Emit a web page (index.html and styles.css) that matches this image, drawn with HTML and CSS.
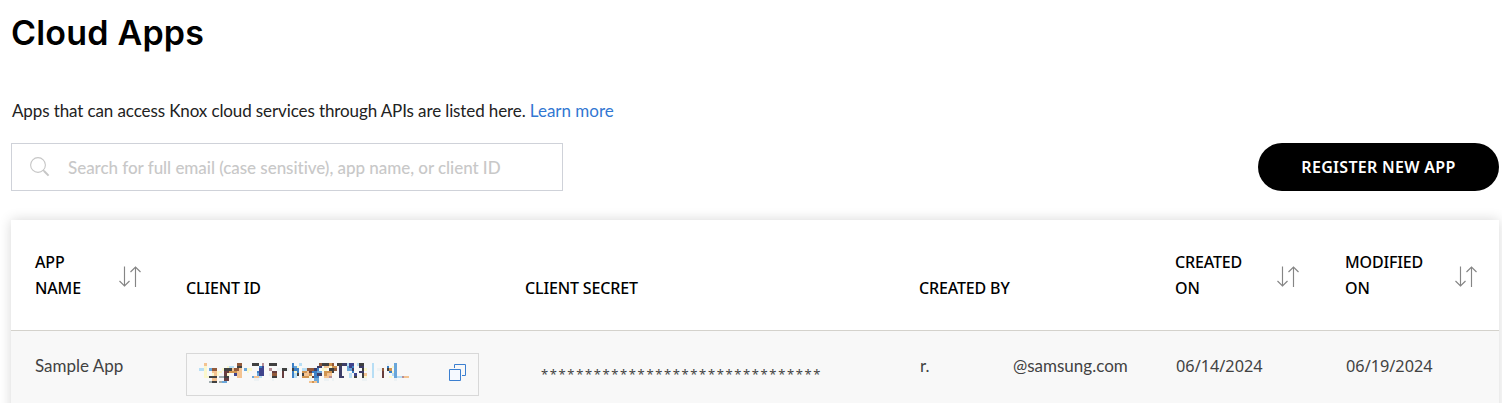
FILE: index.html
```html
<!DOCTYPE html>
<html lang="en">
<head>
<meta charset="utf-8">
<title>Cloud Apps</title>
<link rel="stylesheet" href="styles.css">
</head>
<body>
<svg class="defs" width="0" height="0"><symbol id="sort" viewBox="0 0 22 22"><path d="M5.5.5v20M.5 15l5 5 5-5M16.500 21V1M11.500 6l5-5 5 5" fill="none" stroke="#858585" stroke-width="1.150"/></symbol></svg>
<main class="page">
  <h1 class="title">Cloud Apps</h1>
  <p class="intro">Apps that can access Knox cloud services through APIs are listed here. <a class="link" href="#">Learn more</a></p>
  <div class="toolbar">
    <div class="search">
      <svg class="search-icon" width="20" height="20" viewBox="0 0 20 20" fill="none" stroke="#c6c6c6"><circle cx="8" cy="8" r="7.400" stroke-width="1.100"/><path d="M13 13l1.500 1.500" stroke-width="1.100"/><path d="M14 14l4.600 4.600" stroke-width="2"/></svg>
      <span>Search for full email (case sensitive), app name, or client ID</span>
    </div>
    <button class="register">REGISTER NEW APP</button>
  </div>
  <section class="table">
    <div class="row head">
      <div class="cell"><span class="w-name">APP NAME</span><svg class="sort s1"><use href="#sort"/></svg></div>
      <div class="cell">CLIENT ID</div>
      <div class="cell">CLIENT SECRET</div>
      <div class="cell">CREATED BY</div>
      <div class="cell"><span class="w-date">CREATED ON</span><svg class="sort s2"><use href="#sort"/></svg></div>
      <div class="cell"><span class="w-date">MODIFIED ON</span><svg class="sort s3"><use href="#sort"/></svg></div>
    </div>
    <div class="row body">
      <div class="cell text">Sample App</div>
      <div class="cell idcell">
        <div class="idbox">
          <svg id="mosaic" width="210" height="20" viewBox="0 0 84 8" shape-rendering="crispEdges"></svg>
          <svg width="18" height="18" viewBox="0 0 18 18" fill="none" stroke="#3c7fd0"><path d="M5.500 4V.500h11v11H13"/><path d="M.500 5.500h11v11H.500z" fill="#f5f9ff"/></svg>
        </div>
      </div>
      <div class="cell secret">********************************</div>
      <div class="cell text email"><span>r.</span><span>@samsung.com</span></div>
      <div class="cell date">06/14/2024</div>
      <div class="cell date">06/19/2024</div>
    </div>
  </section>
</main>
<script src="mosaic.js"></script>
</body>
</html>
```
FILE: styles.css
```css
* { box-sizing: border-box; }
body { margin: 0; background: #fff; overflow: hidden; height: 403px; font-family: Lato, "Noto Sans", sans-serif; font-size: 17px; color: #222; }
.defs { display: block; height: 0; }
.page { padding: 10px 3px 0 11px; }
.title { margin: 0; font: 600 34px/46px Inter, sans-serif; letter-spacing: 0.2px; color: #000; }
.intro { margin: 42px 0 0; padding-left: 1px; line-height: 26px; letter-spacing: -0.110px; white-space: nowrap; }
.link { color: #3277d2; text-decoration: none; letter-spacing: 0; }
.toolbar { display: flex; justify-content: space-between; margin-top: 19px; }
.search { display: flex; align-items: center; gap: 18px; width: 552px; height: 48px; padding-left: 18px; border: 1px solid #cfd2d9; color: #c8c8c8; letter-spacing: -0.040px; font-weight: 500; }
.register { width: 241px; height: 48px; padding: 0; border: 0; border-radius: 24px; background: #000; color: #fff; font: 600 16px "Noto Sans", sans-serif; letter-spacing: 0.300px; }
.table { margin-top: 29px; height: 200px; background: #fff; box-shadow: 0 0 12px rgba(0, 0, 0, 0.16); }
.row { display: grid; grid-template-columns: 151px 339px 394px 256px 170px 1fr; padding-left: 24px; }
.head { height: 111px; padding-bottom: 29px; align-items: end; border-bottom: 1px solid #d4d2cc; font: 500 16px/26px "Noto Sans", sans-serif; letter-spacing: -0.150px; color: #000; }
.head .cell { display: flex; align-items: center; }
.w-name { width: 84px; padding-right: 30px; }
.w-date { width: 102px; padding-right: 20px; }
.sort { width: 22px; height: 22px; flex: none; margin-top: 3px; }
.s3 { margin-left: 8px; }
.body { height: 90px; background: #f8f8f8; color: #424242; line-height: 26px; }
.text { padding-top: 22px; }
.idcell { padding-top: 22px; }
.idbox { display: flex; justify-content: space-between; align-items: center; width: 293px; height: 43px; padding: 0 11px 3px 12px; border: 1px solid #d8d8d8; }
.secret { padding: 30px 0 0 16px; font: 13px/26px "Noto Sans", sans-serif; letter-spacing: 1.620px; }
.email { display: flex; padding-left: 1px; }
.email span:first-child { width: 93px; }
.date { padding: 22px 0 0 1px; font: 16.300px/26px "Noto Sans", sans-serif; }
```
FILE: mosaic.js
```js
// Redacted client ID: each row lists cells as column, length, colour key.
const colors = { k:'#404040', n:'#3d3d68', i:'#3f438c', b:'#3b80c6', s:'#69a6da', l:'#b7def5', p:'#f4c391', o:'#d19551', r:'#673e3f', m:'#925a3b', y:'#fbf8cc', g:'#a2aeb0', v:'#b69099', w:'#edf2f4' };
const rows = [
  '2,1,p 15,2,m 21,3,k 25,1,v 28,3,k 37,1,b 40,1,l 48,1,m 49,3,k 52,1,o 53,1,m 55,2,k 57,2,n 59,1,l 60,2,i 63,1,l 64,2,k 69,1,l 75,1,w 78,1,s',
  '2,1,y 11,1,y 12,2,l 15,2,k 24,1,b 25,1,i 37,1,b 38,1,s 39,1,y 47,2,n 49,1,w 50,2,p 52,1,y 53,2,o 56,1,n 59,1,s 60,1,i 61,1,b 64,2,n 69,1,l 75,1,b 77,1,y 78,1,s',
  '0,2,l 2,1,y 4,1,s 5,2,m 9,1,y 10,2,k 12,1,k 13,1,p 14,2,m 16,1,p 18,1,s 19,2,y 24,2,i 28,1,v 31,2,w 33,2,k 35,1,w 37,1,k 38,2,b 41,2,l 43,3,m 46,1,n 47,1,b 49,2,y 52,2,k 54,1,m 56,1,n 59,2,s 61,1,n 65,1,k 66,1,y 69,1,l 71,2,w 73,1,m 75,1,k 76,1,o 78,1,s',
  '2,1,y 5,2,p 7,2,y 10,2,r 12,3,o 15,2,p 19,1,y 23,1,b 24,2,i 29,2,r 33,1,r 37,1,b 38,1,y 39,1,b 41,2,o 43,1,p 44,1,r 45,2,b 47,2,s 50,3,o 53,1,k 56,1,n 59,1,w 61,1,b 64,2,n 69,1,l 73,1,r 76,1,b 77,1,y 78,1,s',
  '2,1,y 5,1,y 6,1,p 7,1,y 10,2,r 11,1,y 14,1,i 15,2,p 23,1,s 24,2,i 28,1,w 29,2,m 33,1,r 37,1,b 38,1,l 39,1,k 41,1,k 42,2,p 44,1,o 46,1,b 47,2,n 50,1,o 51,2,p 56,1,n 60,1,l 62,1,i 65,1,k 66,1,p 69,1,l 73,1,r 77,1,l 78,1,s',
  '2,2,y 4,3,k 8,1,g 9,1,g 10,2,k 15,2,p 21,1,s 22,2,p 24,1,l 29,2,k 33,1,r 37,1,b 38,1,l 41,3,o 44,1,y 45,1,r 46,2,b 50,2,p 52,1,v 56,2,n 60,1,l 62,1,k 65,1,k 66,1,y 69,1,l 73,1,r 76,1,y 78,1,s 79,2,l 81,1,v 82,2,p',
  '5,2,p 10,2,r 22,2,w 29,1,w 44,1,w 46,2,s 50,2,w 53,1,w 65,2,w 78,1,w',
  '4,1,g 5,2,k 8,1,g 9,2,s 44,1,p 45,1,o 46,1,p 47,1,s'
];
document.getElementById('mosaic').innerHTML = rows.map((row, y) => row.split(' ').map(cell => {
  const [x, w, c] = cell.split(',');
  return `<rect x="${x}" y="${y}" width="${w}" height="1" fill="${colors[c]}"/>`;
}).join('')).join('');
```
